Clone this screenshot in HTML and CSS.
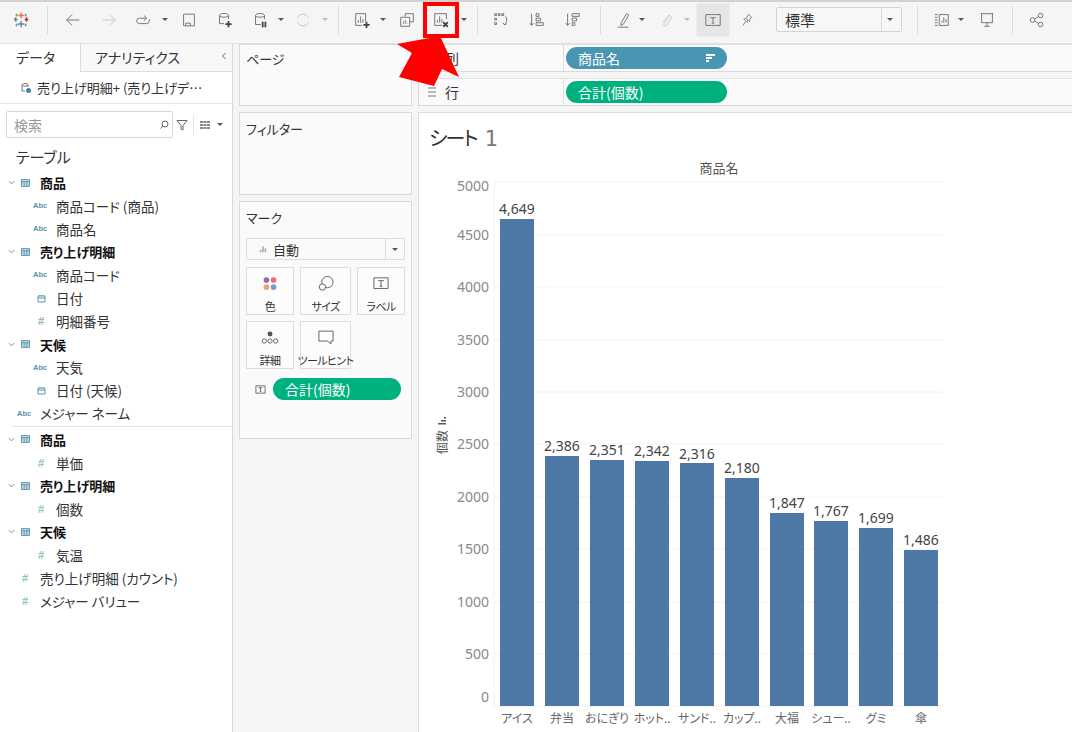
FILE: index.html
```html
<!DOCTYPE html>
<html lang="ja">
<head>
    <meta charset="UTF-8">
    <title>Tableau シート 1</title>
    <link rel="stylesheet" href="styles.css">
</head>
<body>
    <!-- ツールバー -->
    <header class="toolbar">
        <span class="tool"><svg class="logo" viewBox="0 0 20 20"><path class="logo-a" d="M9 2v6M6 5h6"/><path class="logo-b" d="M9 11v7M5.500 14.500h7"/><path class="logo-c" d="M3 7v5M1 9.500h4"/><path class="logo-d" d="M15 7v5M13 9.500h4"/><path class="logo-e" d="M4 3v3M2.500 4.500h3M14 3v3M12.500 4.500h3M4 14v3M2.500 15.500h3M14 14v3M12.500 15.500h3"/></svg></span>
        <span class="tool"><i class="sep"></i></span>
        <span class="tool"><svg viewBox="0 0 20 20"><path d="M17 10H3M9 4l-6 6 6 6"/></svg></span>
        <span class="tool off"><svg viewBox="0 0 20 20"><path d="M3 10h14M11 4l6 6-6 6"/></svg></span>
        <span class="tool"><svg viewBox="0 0 20 20"><path d="M14 8H6a3 3 0 0 0 0 6h8a3 3 0 0 0 3-3V9M11 5l3 3-3 3"/></svg></span>
        <span class="tool"><b class="caret"></b></span>
        <span class="tool"><svg viewBox="0 0 20 20"><path d="M4 3.500h12v13H4zM6.500 16.500v-3h5v3"/></svg></span>
        <span class="tool"><svg viewBox="0 0 20 20"><path d="M5 5v9h5M15 5v4M5 5c0-3 10-3 10 0 0 2.500-10 2.500-10 0"/><path class="thick" d="M15 11v7M11.500 14.500h7"/></svg></span>
        <span class="tool"><svg viewBox="0 0 20 20"><path d="M5 5v10h6M15 5v4M5 5c0-3 10-3 10 0 0 2.500-10 2.500-10 0"/><path class="thick" d="M13 12v6M16 12v6"/></svg></span>
        <span class="tool"><b class="caret"></b></span>
        <span class="tool off"><svg viewBox="0 0 20 20"><path d="M16 8a6.500 6.500 0 0 0-12-1M4 12a6.500 6.500 0 0 0 12 1"/></svg></span>
        <span class="tool"><b class="caret light"></b></span>
        <span class="tool"><i class="sep"></i></span>
        <span class="tool"><svg viewBox="0 0 20 20"><path d="M14 12V3H3v13h7M6 13v-3M8.500 13V6M11 13V9"/><path class="thick" d="M15 12v7M11.500 15.500h7"/></svg></span>
        <span class="tool"><b class="caret"></b></span>
        <span class="tool"><svg viewBox="0 0 20 20"><path d="M8 6V3h9v9h-4M3 7h10v10H3zM6 14v-2M8 14v-4M10 14v-1"/></svg></span>
        <span class="tool marked"><svg viewBox="0 0 20 20"><path d="M16 9V3H3v13h8M6 13v-3M8.500 13V6M11 13V9"/><path class="thick" d="M12.500 12.500l5 5M17.500 12.500l-5 5"/></svg></span>
        <span class="tool"><b class="caret"></b></span>
        <span class="tool"><i class="sep"></i></span>
        <span class="tool"><svg viewBox="0 0 20 20"><path d="M3 3h2v2H3zM7 3h2v2H7zM11 3h2v2h-2zM3 8h2v2H3zM3 13h2v2H3zM15 6c2 2 2 6-1 9M12 13l2 2.500 2.500-1.500"/></svg></span>
        <span class="tool"><svg viewBox="0 0 20 20"><path d="M4 3v13M2 13.500L4 16l2-2.500M9 3h3v3H9zM9 8h5v3H9zM9 13h8v3H9z"/></svg></span>
        <span class="tool"><svg viewBox="0 0 20 20"><path d="M4 3v13M2 13.500L4 16l2-2.500M9 3h8v3H9zM9 8h5v3H9zM9 13h3v3H9z"/></svg></span>
        <span class="tool"><i class="sep"></i></span>
        <span class="tool"><svg viewBox="0 0 20 20"><path d="M8 13l6-10 2.500 1.500-6 10-3 1.500zM4 18h12"/></svg></span>
        <span class="tool"><b class="caret"></b></span>
        <span class="tool off"><svg viewBox="0 0 20 20"><path d="M14 6l-6 8c-1.500 2 1 4 2.500 2l5-7c2-3-2-5.500-4-3l-5 7"/></svg></span>
        <span class="tool"><b class="caret light"></b></span>
        <span class="tool active"><svg viewBox="0 0 20 20"><path d="M2 4h16v12H2zM7 7.500h6M10 7.500v6M8.500 13.500h3"/></svg></span>
        <span class="tool"><svg class="pin" viewBox="0 0 20 20"><path d="M12 3l4 4-2 1-1 4-4-4zM9 8l-3 1 4 4 1-3M8 12l-3 5"/></svg></span>
        <div class="fit-select"><span>標準</span><b class="caret"></b></div>
        <span class="tool"><i class="sep"></i></span>
        <span class="tool"><svg viewBox="0 0 20 20"><path d="M7 4h10v12H7zM10 13v-2M12 13V7M14.500 13v-4M2 4h3M2 7h3M2 10h3M2 13h3M2 16h3"/></svg></span>
        <span class="tool"><b class="caret"></b></span>
        <span class="tool"><svg viewBox="0 0 20 20"><path d="M3 3h14M4 3v10h12V3M10 13v4M7 17h6"/></svg></span>
        <span class="tool"><i class="sep"></i></span>
        <span class="tool"><svg viewBox="0 0 20 20"><circle cx="5" cy="10" r="2.500"/><circle cx="14" cy="5" r="2.500"/><circle cx="14" cy="15" r="2.500"/><path d="M7 9l5-3M7 11l5 3"/></svg></span>
    </header>

    <main class="workspace">
        <!-- データペイン -->
        <aside class="data-pane">
            <div class="tabs">
                <div class="tab current">データ</div>
                <div class="tab">アナリティクス<svg class="collapse" viewBox="0 0 8 10"><path d="M5.500 2L2.500 5l3 3"/></svg></div>
            </div>
            <div class="source">
                <svg viewBox="0 0 12 12"><path class="src-line" d="M2 3v6h3M8 3v2M2 3c0-2 6-2 6 0 0 1.500-6 1.500-6 0"/><circle class="src-dot" cx="8.500" cy="8.500" r="2.500"/></svg>
                <span>売り上げ明細+ (売り上げデ…</span>
            </div>
            <div class="search-row">
                <div class="search">
                    <span>検索</span>
                    <svg viewBox="0 0 10 10"><circle cx="6" cy="4" r="3"/><path d="M4 6L1.500 8.500"/></svg>
                </div>
                <svg class="funnel" viewBox="0 0 12 12"><path d="M1 1.500h10L7 6.500V11L5 10V6.500z"/></svg>
                <i class="search-sep"></i>
                <svg class="grid-icon" viewBox="0 0 10 8"><path d="M0 0h3v2H0zM3.500 0h3v2h-3zM7 0h3v2H7zM0 3h3v2H0zM3.500 3h3v2h-3zM7 3h3v2H7zM0 6h3v2H0zM3.500 6h3v2h-3zM7 6h3v2H7z"/></svg>
                <b class="caret"></b>
            </div>
            <h2 class="tables-title">テーブル</h2>
            <ul class="fields">
                <li class="table"><svg class="chev" viewBox="0 0 8 8"><path d="M1 2.500L4 5.500l3-3"/></svg><svg class="tbl" viewBox="0 0 10 9"><path d="M.5.500h9v8h-9zM.5 3h9M3.500 3v5.500M6.500 3v5.500"/></svg><strong>商品</strong></li>
                <li class="field"><em class="abc">Abc</em>商品コード (商品)</li>
                <li class="field"><em class="abc">Abc</em>商品名</li>
                <li class="table"><svg class="chev" viewBox="0 0 8 8"><path d="M1 2.500L4 5.500l3-3"/></svg><svg class="tbl" viewBox="0 0 10 9"><path d="M.5.500h9v8h-9zM.5 3h9M3.500 3v5.500M6.500 3v5.500"/></svg><strong>売り上げ明細</strong></li>
                <li class="field"><em class="abc">Abc</em>商品コード</li>
                <li class="field"><svg class="date" viewBox="0 0 9 9"><path d="M1 2h7v6H1zM1 4h7M3 1v1M6 1v1"/></svg>日付</li>
                <li class="field"><em class="num dim">#</em>明細番号</li>
                <li class="table"><svg class="chev" viewBox="0 0 8 8"><path d="M1 2.500L4 5.500l3-3"/></svg><svg class="tbl" viewBox="0 0 10 9"><path d="M.5.500h9v8h-9zM.5 3h9M3.500 3v5.500M6.500 3v5.500"/></svg><strong>天候</strong></li>
                <li class="field"><em class="abc">Abc</em>天気</li>
                <li class="field"><svg class="date" viewBox="0 0 9 9"><path d="M1 2h7v6H1zM1 4h7M3 1v1M6 1v1"/></svg>日付 (天候)</li>
                <li class="top-field divider"><em class="abc">Abc</em>メジャー ネーム</li>
                <li class="table"><svg class="chev" viewBox="0 0 8 8"><path d="M1 2.500L4 5.500l3-3"/></svg><svg class="tbl" viewBox="0 0 10 9"><path d="M.5.500h9v8h-9zM.5 3h9M3.500 3v5.500M6.500 3v5.500"/></svg><strong>商品</strong></li>
                <li class="field"><em class="num">#</em>単価</li>
                <li class="table"><svg class="chev" viewBox="0 0 8 8"><path d="M1 2.500L4 5.500l3-3"/></svg><svg class="tbl" viewBox="0 0 10 9"><path d="M.5.500h9v8h-9zM.5 3h9M3.500 3v5.500M6.500 3v5.500"/></svg><strong>売り上げ明細</strong></li>
                <li class="field"><em class="num">#</em>個数</li>
                <li class="table"><svg class="chev" viewBox="0 0 8 8"><path d="M1 2.500L4 5.500l3-3"/></svg><svg class="tbl" viewBox="0 0 10 9"><path d="M.5.500h9v8h-9zM.5 3h9M3.500 3v5.500M6.500 3v5.500"/></svg><strong>天候</strong></li>
                <li class="field"><em class="num">#</em>気温</li>
                <li class="top-field"><em class="num">#</em>売り上げ明細 (カウント)</li>
                <li class="top-field"><em class="num">#</em>メジャー バリュー</li>
            </ul>
        </aside>

        <!-- ページ・フィルター・マーク -->
        <section class="cards">
            <div class="card pages">ページ</div>
            <div class="card filters">フィルター</div>
            <div class="card marks">
                <div>マーク</div>
                <div class="mark-type">
                    <svg viewBox="0 0 10 10"><path d="M1 9V6h2v3zM4 9V2h2v7zM7 9V4h2v5z"/></svg>
                    <span>自動</span>
                    <b class="caret"></b>
                </div>
                <div class="mark-grid">
                    <div class="mark-tile">
                        <svg viewBox="0 0 24 24"><circle class="dot1" cx="7" cy="7" r="4"/><circle class="dot2" cx="17" cy="7" r="4"/><circle class="dot3" cx="7" cy="17" r="4"/><circle class="dot4" cx="17" cy="17" r="4"/></svg>
                        <span>色</span>
                    </div>
                    <div class="mark-tile">
                        <svg viewBox="0 0 24 24"><circle class="line" cx="14" cy="10" r="8"/><circle class="line fillwhite" cx="7" cy="17" r="4.500"/></svg>
                        <span>サイズ</span>
                    </div>
                    <div class="mark-tile">
                        <svg viewBox="0 0 24 24"><path class="line" d="M2 4h20v15H2zM8 8h8M12 8v8M10 16h4"/></svg>
                        <span>ラベル</span>
                    </div>
                    <div class="mark-tile">
                        <svg viewBox="0 0 24 24"><circle class="solid" cx="12" cy="7" r="3.500"/><circle class="line" cx="4" cy="17" r="3"/><circle class="line" cx="12" cy="17" r="3"/><circle class="line" cx="20" cy="17" r="3"/></svg>
                        <span>詳細</span>
                    </div>
                    <div class="mark-tile">
                        <svg viewBox="0 0 24 24"><path class="line" d="M2 3h20v14h-3v4l-5-4H2z"/></svg>
                        <span>ツールヒント</span>
                    </div>
                </div>
                <div class="mark-pill-row">
                    <svg viewBox="0 0 12 12"><path class="line" d="M1 2h10v8H1zM4 4h4M6 4v4M5 8h2"/></svg>
                    <div class="pill green">合計(個数)</div>
                </div>
            </div>
        </section>

        <!-- シェルフとビュー -->
        <section class="view">
            <div class="shelf">
                <div class="shelf-name"><svg viewBox="0 0 12 12"><path d="M2 2v8M6 2v8M10 2v8"/></svg>列</div>
                <div class="shelf-body">
                    <div class="pill blue">商品名<svg class="sort" viewBox="0 0 9 8"><path d="M0 0h9v2H0zM0 3h6v2H0zM0 6h3v2H0z"/></svg></div>
                </div>
            </div>
            <div class="shelf">
                <div class="shelf-name"><svg viewBox="0 0 12 12"><path d="M2 2h8M2 6h8M2 10h8"/></svg>行</div>
                <div class="shelf-body">
                    <div class="pill green">合計(個数)</div>
                </div>
            </div>
            <div class="sheet">
                <h1>シート<span>1</span></h1>
                <svg class="chart" viewBox="419 160 652 572">
                    <text class="head" x="719" y="173">商品名</text>

                    <path class="grid" d="M494 182V706M494 182H943M494 235H943M494 287H943M494 340H943M494 392H943M494 444H943M494 497H943M494 549H943M494 602H943M494 654H943M494 706H943"/>

                    <text class="tick" x="489" y="191">5000</text>
                    <text class="tick" x="489" y="240">4500</text>
                    <text class="tick" x="489" y="292">4000</text>
                    <text class="tick" x="489" y="345">3500</text>
                    <text class="tick" x="489" y="397">3000</text>
                    <text class="tick" x="489" y="449">2500</text>
                    <text class="tick" x="489" y="502">2000</text>
                    <text class="tick" x="489" y="554">1500</text>
                    <text class="tick" x="489" y="607">1000</text>
                    <text class="tick" x="489" y="659">500</text>
                    <text class="tick" x="489" y="702">0</text>

                    <text class="axis-title" transform="translate(447 454) rotate(-90)">個数</text>
                    <path class="axis-mark" d="M438 423h8v1.500h-8zM441 420h5v1.500h-5zM444 417h2v1.500h-2z"/>

                    <rect class="bar" x="500" y="219" width="34" height="487"/>
                    <rect class="bar" x="545" y="456" width="34" height="250"/>
                    <rect class="bar" x="590" y="460" width="34" height="246"/>
                    <rect class="bar" x="635" y="461" width="34" height="245"/>
                    <rect class="bar" x="680" y="463" width="34" height="243"/>
                    <rect class="bar" x="725" y="478" width="34" height="228"/>
                    <rect class="bar" x="770" y="513" width="34" height="193"/>
                    <rect class="bar" x="814" y="521" width="34" height="185"/>
                    <rect class="bar" x="859" y="528" width="34" height="178"/>
                    <rect class="bar" x="904" y="550" width="34" height="156"/>

                    <text class="value" x="517" y="214">4,649</text>
                    <text class="value" x="562" y="451">2,386</text>
                    <text class="value" x="607" y="455">2,351</text>
                    <text class="value" x="652" y="456">2,342</text>
                    <text class="value" x="697" y="459">2,316</text>
                    <text class="value" x="742" y="473">2,180</text>
                    <text class="value" x="787" y="508">1,847</text>
                    <text class="value" x="831" y="516">1,767</text>
                    <text class="value" x="876" y="523">1,699</text>
                    <text class="value" x="921" y="545">1,486</text>

                    <text class="cat" x="517" y="723">アイス</text>
                    <text class="cat" x="562" y="723">弁当</text>
                    <text class="cat" x="607" y="723">おにぎり</text>
                    <text class="cat" x="652" y="723">ホット..</text>
                    <text class="cat" x="697" y="723">サンド..</text>
                    <text class="cat" x="742" y="723">カップ..</text>
                    <text class="cat" x="787" y="723">大福</text>
                    <text class="cat" x="831" y="723">シュー..</text>
                    <text class="cat" x="876" y="723">グミ</text>
                    <text class="cat" x="921" y="723">傘</text>
                </svg>
            </div>
        </section>
    </main>

    <!-- 赤い矢印 -->
    <svg class="callout" viewBox="0 0 70 60"><path d="M45 2L64 43 47 35 39 52 4 43 17 19 2 10z"/></svg>
</body>
</html>
```

FILE: styles.css
```css
* {
    box-sizing: border-box;
}
html, body {
    height: 100%;
}
body {
    margin: 0;
    overflow: hidden;
    position: relative;
    background: #f5f5f5;
    color: #333;
    font-family: "Noto Sans CJK JP", "Noto Sans", sans-serif;
    font-feature-settings: "palt";
    font-size: 14px;
}
em, i {
    font-style: normal;
}

/* toolbar: columns are the distance from one item to the next */
.toolbar {
    height: 44px;
    padding-left: 12px;
    padding-bottom: 6px;
    display: grid;
    grid-template-columns: 25px 26px 36px 34px 22px 24px 35px 36px 21px 22px 22px 13px 24px 21px 24px 34px 23px 13px 24px 36px 36px 27px 23px 19px 24px 21px 26px 34px 39px 131px 25px 19px 26px 25px 25px 1fr;
    align-items: center;
    background: #f5f5f5;
    border-top: 2px solid #d2d2d2;
    border-bottom: 1px solid #e2e2e2;
}
.tool {
    width: 20px;
    height: 20px;
    display: flex;
    align-items: center;
    justify-content: center;
}
.tool svg {
    width: 18px;
    height: 18px;
    fill: none;
    stroke: #777;
    stroke-width: 1.100;
}
.tool svg.pin {
    width: 16px;
    height: 16px;
}
.tool svg.logo {
    stroke-width: 1.600;
}
.tool.off svg {
    stroke: #c8c8c8;
}
.tool svg .thick {
    stroke: #444;
    stroke-width: 2;
}
.tool.active {
    background: #e6e6e6;
    box-shadow: 0 0 0 6.500px #e6e6e6;
}
.tool.marked {
    outline: 4px solid #ff0000;
    outline-offset: 4px;
}
.tool svg .logo-a {
    stroke: #e8762b;
}
.tool svg .logo-b {
    stroke: #5b879b;
}
.tool svg .logo-c {
    stroke: #59879b;
}
.tool svg .logo-d {
    stroke: #c72035;
}
.tool svg .logo-e {
    stroke: #7099a6;
    stroke-width: 1.200;
}
.sep {
    width: 1px;
    height: 28px;
    background: #dcdcdc;
}
.caret {
    width: 0;
    height: 0;
    border-left: 3px solid transparent;
    border-right: 3px solid transparent;
    border-top: 3px solid #555;
}
.caret.light {
    border-top-color: #bbb;
}
.fit-select {
    width: 126px;
    height: 25px;
    display: flex;
    align-items: center;
    justify-content: space-between;
    padding: 0 8px 0 8px;
    font-size: 15px;
    background: #f7f7f7;
    border: 1px solid #d4d4d4;
    border-radius: 2px;
    background-image: linear-gradient(#d9d9d9, #d9d9d9);
    background-size: 1px 100%;
    background-position: right 19px top;
    background-repeat: no-repeat;
}

.workspace {
    display: flex;
    height: 688px;
}

/* data pane */
.data-pane {
    width: 233px;
    flex: none;
    background: #fff;
    border-right: 1px solid #d9d9d9;
}
.tabs {
    display: flex;
    height: 28px;
    font-size: 14px;
}
.tab {
    flex: 1;
    position: relative;
    padding: 3px 0 0 14px;
    background: #f8f8f8;
    border-bottom: 1px solid #dcdcdc;
}
.tab.current {
    flex: none;
    width: 81px;
    padding-left: 16px;
    background: #fff;
    border-right: 1px solid #dcdcdc;
    border-bottom: none;
}
.collapse {
    position: absolute;
    right: 4px;
    top: 7px;
    width: 8px;
    height: 10px;
    fill: none;
    stroke: #666;
}
.source {
    height: 32px;
    display: flex;
    align-items: center;
    gap: 5px;
    padding-left: 20px;
    font-size: 13px;
    border-bottom: 1px solid #e6e6e6;
}
.source svg {
    width: 12px;
    height: 12px;
    fill: none;
}
.src-line {
    stroke: #777;
}
.src-dot {
    fill: #3d85a8;
}
.search-row {
    height: 27px;
    margin: 7px 0 0 6px;
    display: flex;
    align-items: center;
}
.search {
    width: 167px;
    height: 27px;
    padding: 0 3px 0 7px;
    display: flex;
    align-items: center;
    justify-content: space-between;
    color: #999;
    border: 1px solid #d6d6d6;
    border-radius: 2px;
}
.search svg {
    width: 10px;
    height: 10px;
    fill: none;
    stroke: #666;
}
.funnel {
    width: 12px;
    height: 12px;
    margin-left: 3px;
    fill: none;
    stroke: #666;
}
.search-sep {
    width: 1px;
    height: 20px;
    margin: 0 6px 0 5px;
    background: #e2e2e2;
}
.grid-icon {
    width: 10px;
    height: 8px;
    margin-right: 7px;
    fill: #888;
}
.tables-title {
    margin: 7px 0 0 16px;
    height: 24px;
    font-size: 15px;
    font-weight: normal;
    line-height: 24px;
}
.fields {
    margin: 2px 0 0;
    padding: 0;
    list-style: none;
    font-size: 13.500px;
}
.fields li {
    height: 23.100px;
    display: flex;
    align-items: center;
    white-space: nowrap;
    position: relative;
}
.fields .table {
    padding-left: 8px;
}
.fields .field {
    padding-left: 33px;
}
.fields .top-field {
    padding-left: 17px;
}
.fields .divider {
    height: 26px;
    padding-bottom: 3px;
    background: linear-gradient(#e2e2e2, #e2e2e2) left 13px bottom 1px / 100% 1px no-repeat;
}
.chev {
    width: 7px;
    height: 7px;
    fill: none;
    stroke: #777;
    margin-right: 6px;
}
.tbl {
    width: 9px;
    height: 8px;
    fill: #bcd7e2;
    stroke: #5b93ad;
    stroke-width: 1;
    margin-right: 10px;
}
.fields strong {
    color: #111;
    font-size: 13px;
}
.abc {
    width: 23px;
    font-family: "Liberation Sans", sans-serif;
    font-size: 7.500px;
    font-weight: bold;
    color: #5a93ad;
}
.date {
    width: 9px;
    height: 9px;
    margin: 0 10px 0 4px;
    fill: none;
    stroke: #5a93ad;
}
.num {
    width: 23px;
    padding-left: 5px;
    font-family: "Liberation Sans", sans-serif;
    font-size: 11px;
    font-weight: bold;
    color: #8cc9af;
}
.num.dim {
    color: #8fb3c4;
}

/* pages, filters, marks */
.cards {
    width: 173px;
    flex: none;
    margin-left: 6px;
    display: flex;
    flex-direction: column;
}
.card {
    padding: 4px 6px;
    font-size: 13px;
    background: #fafafa;
    border: 1px solid #dadada;
}
.pages {
    height: 62px;
}
.filters {
    height: 83px;
    margin-top: 6px;
    padding-top: 6px;
}
.marks {
    height: 238px;
    margin-top: 6px;
    padding-top: 6px;
}
.mark-type {
    height: 22px;
    margin-top: 11px;
    padding: 0 6px 0 12px;
    display: flex;
    align-items: center;
    gap: 6px;
    border: 1px solid #dcdcdc;
    border-radius: 2px;
    background: linear-gradient(#dcdcdc, #dcdcdc) right 18px top / 1px 100% no-repeat;
}
.mark-type svg {
    width: 8px;
    height: 8px;
    fill: #aaa;
}
.mark-type span {
    flex: 1;
}
.mark-grid {
    display: grid;
    grid-template-columns: 48px 51px 48px;
    grid-auto-rows: 48px;
    gap: 6px;
    margin-top: 7px;
}
.mark-tile {
    display: flex;
    flex-direction: column;
    align-items: center;
    padding-top: 7px;
    font-size: 11px;
    letter-spacing: -.600px;
    white-space: nowrap;
    border: 1px solid #dcdcdc;
    background: #fcfcfc;
}
.mark-tile svg {
    width: 18px;
    height: 18px;
    margin-bottom: 6px;
}
.line {
    fill: none;
    stroke: #666;
    stroke-width: 1.400;
}
.fillwhite {
    fill: #fafafa;
}
.solid {
    fill: #555;
}
.dot1 { fill: #8f6f9f; }
.dot2 { fill: #ed6a7d; }
.dot3 { fill: #eea26f; }
.dot4 { fill: #6f9fcf; }
.mark-pill-row {
    display: flex;
    align-items: center;
    gap: 7px;
    margin: 9px 4px 0 9px;
}
.mark-pill-row svg {
    width: 11px;
    height: 11px;
    flex: none;
}
.mark-pill-row .line {
    stroke-width: 1;
}
.pill {
    height: 22px;
    width: 161px;
    padding: 0 12px;
    display: flex;
    align-items: center;
    justify-content: space-between;
    color: #fff;
    font-size: 14px;
    border-radius: 11px;
}
.mark-pill-row .pill {
    flex: 1;
    width: auto;
}
.pill.green {
    background: #00b180;
}
.pill.blue {
    background: #4996b2;
}
.sort {
    width: 9px;
    height: 8px;
    fill: #fff;
}

/* shelves and view */
.view {
    flex: 1;
    margin-left: 6px;
    display: flex;
    flex-direction: column;
}
.shelf {
    height: 28px;
    margin-bottom: 6px;
    display: flex;
    background: #fafafa;
    border-top: 1px solid #e0e0e0;
    border-bottom: 1px solid #dadada;
}
.shelf-name {
    width: 146px;
    flex: none;
    display: flex;
    align-items: center;
    gap: 7px;
    padding-left: 7px;
    border-right: 1px solid #dcdcdc;
    border-left: 1px solid #dadada;
}
.shelf-name svg {
    width: 12px;
    height: 12px;
    fill: none;
    stroke: #777;
}
.shelf-body {
    flex: 1;
    padding: 2px;
}
.sheet {
    flex: 1;
    background: #fff;
    border-top: 1px solid #dcdcdc;
    border-left: 1px solid #dcdcdc;
}
.sheet h1 {
    margin: 0;
    height: 47px;
    padding: 8px 0 0 10px;
    font-size: 20px;
    font-weight: normal;
    letter-spacing: -2px;
    line-height: 34px;
    color: #333;
}
.sheet h1 span {
    margin-left: 8px;
    font-family: "DejaVu Sans", sans-serif;
    font-size: 21px;
    letter-spacing: 0;
    color: #777;
}
.chart {
    display: block;
    width: 652px;
    height: 572px;
}
.chart text {
    font-family: "Noto Sans", "Noto Sans CJK JP", sans-serif;
}
.head {
    text-anchor: middle;
    font-size: 13px;
    fill: #555;
}
.grid {
    fill: none;
    stroke: #f2f2f2;
}
.tick {
    text-anchor: end;
    font-size: 14px;
    fill: #898989;
}
.axis-title {
    font-size: 12px;
    fill: #555;
}
.axis-mark {
    fill: #555;
}
.bar {
    fill: #4e79a7;
}
.value {
    text-anchor: middle;
    font-size: 14px;
    fill: #444;
}
.cat {
    text-anchor: middle;
    font-size: 12px;
    fill: #666;
}

.callout {
    position: absolute;
    left: 395px;
    top: 34px;
    width: 70px;
    height: 60px;
    fill: #ff0000;
}
```
